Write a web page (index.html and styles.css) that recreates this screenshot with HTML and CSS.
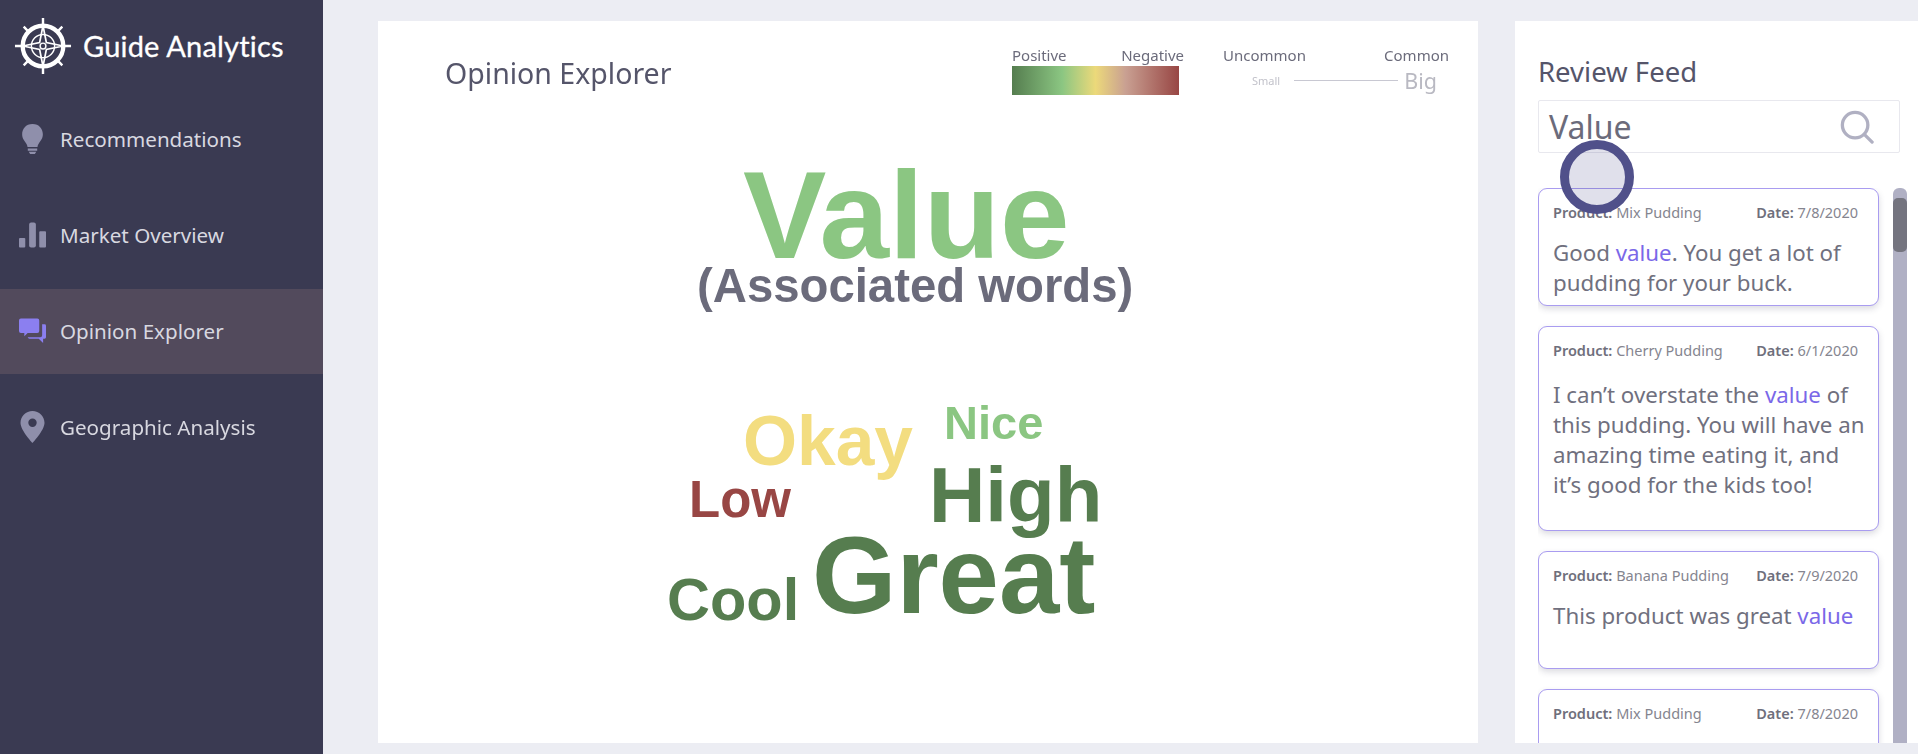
FILE: index.html
```html
<!DOCTYPE html>
<html lang="en">

<head>
    <meta charset="utf-8">
    <meta name="viewport" content="width=device-width, initial-scale=1, shrink-to-fit=no">
    <title>Opinion Explorer</title>
    <link rel="stylesheet" href="styles.css">
</head>

<body>
    <aside class="sidebar">
        <div class="brand">
            <svg class="brand-logo" viewBox="0 0 60 60" fill="none" stroke="#fff">
                <circle cx="30" cy="30" r="21" stroke-width="4.500"/>
                <circle cx="30" cy="30" r="12" stroke-width="1.500"/>
                <circle cx="30" cy="30" r="3" stroke-width="1.500"/>
                <path d="M30 1v9M30 50v9M1 30h9M50 30h9M10 10l4 4M50 10l-4 4M10 50l4-4M50 50l-4-4" stroke-width="2.500"/>
                <path d="M30 9l3.500 17.500L51 30l-17.500 3.500L30 51l-3.500-17.500L9 30l17.500-3.500z" stroke-width="1.800"/>
            </svg>
            <span class="brand-name">Guide Analytics</span>
        </div>
        <nav class="nav">
            <a class="nav-item">
                <svg class="nav-icon" viewBox="0 0 28 34"><path d="M14 1C6.800 1 3 6.300 3 12c0 4.500 2.600 7.300 4.300 9.700 1 1.400 1.200 2.500 1.400 3.800h10.600c.2-1.300.4-2.400 1.400-3.800 1.700-2.400 4.300-5.200 4.300-9.700C25 6.300 21.200 1 14 1z"/><path d="M9 27h10v2.500H9zM10 30.500h8l-1.500 2.500h-5z"/></svg>
                Recommendations
            </a>
            <a class="nav-item">
                <svg class="nav-icon" viewBox="0 0 28 28"><rect x="0" y="17" width="6.500" height="10" rx="1"/><rect x="10.500" y="1" width="7" height="26" rx="2"/><rect x="21" y="10" width="7" height="17" rx="1"/></svg>
                Market Overview
            </a>
            <a class="nav-item active">
                <svg class="nav-icon" viewBox="0 0 28 26"><path d="M2 0h17a2 2 0 0 1 2 2v11a2 2 0 0 1-2 2H9l-3.500 3.500V15H2a2 2 0 0 1-2-2V2a2 2 0 0 1 2-2z"/><path d="M24 6h2.500A1.500 1.500 0 0 1 28 7.500v12a1.500 1.500 0 0 1-1.500 1.500H25v4.500L20.500 21H11a2 2 0 0 1-2-1.500h13a2 2 0 0 0 2-2z"/></svg>
                Opinion Explorer
            </a>
            <a class="nav-item">
                <svg class="nav-icon" viewBox="0 0 24 32"><path fill-rule="evenodd" d="M12 0C5.400 0 0 5.200 0 11.800 0 19.500 12 32 12 32s12-12.500 12-20.200C24 5.200 18.600 0 12 0zm0 16a4.200 4.200 0 1 1 0-8.400 4.200 4.200 0 0 1 0 8.400z"/></svg>
                Geographic Analysis
            </a>
        </nav>
    </aside>

    <main class="content">
        <section class="explorer">
            <header class="explorer-head">
                <h1 class="explorer-title">Opinion Explorer</h1>
                <div class="legend legend-sentiment">
                    <div class="legend-labels"><span>Positive</span><span>Negative</span></div>
                    <div class="legend-gradient"></div>
                </div>
                <div class="legend legend-size">
                    <div class="legend-labels"><span>Uncommon</span><span>Common</span></div>
                    <div class="legend-scale">
                        <span class="scale-small">Small</span>
                        <span class="scale-line"></span>
                        <span class="scale-big">Big</span>
                    </div>
                </div>
            </header>
            <div class="cloud">
                <span class="word word-value">Value</span>
                <span class="word word-assoc">(Associated words)</span>
                <span class="word word-okay">Okay</span>
                <span class="word word-nice">Nice</span>
                <span class="word word-high">High</span>
                <span class="word word-low">Low</span>
                <span class="word word-great">Great</span>
                <span class="word word-cool">Cool</span>
            </div>
        </section>

        <section class="feed">
            <h2 class="feed-title">Review Feed</h2>
            <div class="search">
                <span class="search-text">Value</span>
                <svg class="search-icon" viewBox="0 0 36 36" fill="none" stroke="#b0b0c2" stroke-width="3.500" stroke-linecap="round"><circle cx="16" cy="16" r="13.500"/><path d="M26 26l8 8"/></svg>
            </div>
            <div class="feed-body">
                <div class="review-list">
                    <article class="review review-short">
                        <div class="review-meta"><span><b>Product:</b> Mix Pudding</span><span><b>Date:</b> 7/8/2020</span></div>
                        <p class="review-text">Good <em>value</em>. You get a lot of pudding for your buck.</p>
                    </article>
                    <article class="review review-tall">
                        <div class="review-meta"><span><b>Product:</b> Cherry Pudding</span><span><b>Date:</b> 6/1/2020</span></div>
                        <p class="review-text">I can’t overstate the <em>value</em> of this pudding. You will have an amazing time eating it, and it’s good for the kids too!</p>
                    </article>
                    <article class="review review-short">
                        <div class="review-meta"><span><b>Product:</b> Banana Pudding</span><span><b>Date:</b> 7/9/2020</span></div>
                        <p class="review-text">This product was great <em>value</em></p>
                    </article>
                    <article class="review review-short">
                        <div class="review-meta"><span><b>Product:</b> Mix Pudding</span><span><b>Date:</b> 7/8/2020</span></div>
                    </article>
                </div>
                <div class="scrollbar"><div class="scrollbar-thumb"></div></div>
            </div>
            <div class="touch"></div>
        </section>
    </main>
</body>

</html>
```

FILE: styles.css
```css
* {
    box-sizing: border-box;
}

html,
body {
    height: 100%;
}

body {
    display: flex;
    margin: 0;
    overflow: hidden;
    color: #5f5f70;
    background: #ecedf3;
    font-family: "Noto Sans", sans-serif;
    filter: blur(.4px);
}

/* sidebar */
.sidebar {
    flex: 0 0 323px;
    background: #3a3a52;
    color: #d8d8e0;
}

.brand {
    display: flex;
    align-items: center;
    gap: 11px;
    height: 97px;
    padding: 0 0 6px 14px;
}

.brand-logo {
    width: 58px;
    height: 58px;
}

.brand-name {
    color: #fff;
    font-family: "Lato", sans-serif;
    font-size: 29px;
    letter-spacing: .2px;
    -webkit-text-stroke: .3px #fff;
}

.nav {
    display: flex;
    flex-direction: column;
    gap: 11px;
}

.nav-item {
    display: flex;
    align-items: center;
    height: 85px;
    padding: 0 0 2px 19px;
    font-size: 20.600px;
}

.nav-item.active {
    background: #524a5c;
}

.nav-icon {
    flex: 0 0 27px;
    width: 27px;
    height: 32px;
    margin-right: 14px;
    fill: #8f8fab;
}

.nav-item.active .nav-icon {
    fill: #8b7ff0;
}

/* main area */
.content {
    flex: 1;
    display: flex;
    gap: 37px;
    padding: 21px 0 11px 55px;
    min-width: 0;
}

.explorer {
    flex: 0 0 1100px;
    display: flex;
    flex-direction: column;
    background: #fff;
}

.explorer-head {
    display: flex;
    flex: 0 0 90px;
    padding: 25px 29px 0 67px;
}

.explorer-title {
    margin: 9px auto 0 0;
    font-size: 28.500px;
    font-weight: 400;
    line-height: 36px;
    color: #55556a;
}

.legend-labels {
    display: flex;
    justify-content: space-between;
    font-size: 15px;
    line-height: 18px;
    color: #6b6b7b;
}

.legend-sentiment {
    width: 172px;
}

.legend-gradient {
    width: 167px;
    height: 29px;
    margin-top: 2px;
    background: linear-gradient(90deg, #557d4f 0%, #8bc682 30%, #ecd97a 50%, #c9a092 68%, #984644 100%);
}

.legend-size {
    width: 226px;
    margin-left: 39px;
}

.legend-scale {
    display: flex;
    align-items: center;
    padding-left: 29px;
    height: 32px;
}

.scale-small {
    font-size: 11px;
    color: #c2c2ca;
}

.scale-line {
    width: 104px;
    height: 1px;
    margin: 0 6px 0 14px;
    background: #c8c8d2;
}

.scale-big {
    font-size: 21.500px;
    color: #b9b9c2;
}

.cloud {
    position: relative;
    flex: 1;
    font-family: "Liberation Sans", sans-serif;
    font-weight: 700;
}

.word {
    position: absolute;
    line-height: 1;
    white-space: nowrap;
}

.word-value {
    left: 365px;
    top: 41px;
    font-size: 125px;
    color: #8bc682;
}

.word-assoc {
    left: 319px;
    top: 151px;
    font-size: 47.300px;
    color: #6b6b7b;
}

.word-okay {
    left: 365px;
    top: 296px;
    font-size: 69.500px;
    color: #f3dd80;
}

.word-nice {
    left: 566px;
    top: 288px;
    font-size: 47px;
    color: #8bc682;
}

.word-high {
    left: 551px;
    top: 345px;
    font-size: 78px;
    color: #567d4f;
}

.word-low {
    left: 311px;
    top: 363px;
    font-size: 51px;
    color: #984644;
}

.word-great {
    left: 434px;
    top: 411px;
    font-size: 108.500px;
    color: #567d4f;
}

.word-cool {
    left: 289px;
    top: 459px;
    font-size: 59.500px;
    color: #567d4f;
}

/* review feed */
.feed {
    position: relative;
    flex: 1;
    display: flex;
    flex-direction: column;
    min-width: 0;
    padding: 33px 11px 0 23px;
    background: #fff;
}

.feed-title {
    margin: 0;
    font-size: 27.500px;
    font-weight: 400;
    line-height: 36px;
    color: #55556a;
}

.search {
    display: flex;
    align-items: center;
    justify-content: space-between;
    height: 53px;
    margin: 10px 7px 0 0;
    padding: 0 25px 0 10px;
    border: 1px solid #e8e8ee;
    border-radius: 2px;
}

.search-text {
    font-size: 32px;
    color: #6b6b7b;
}

.search-icon {
    width: 34px;
    height: 34px;
}

.feed-body {
    flex: 1;
    display: flex;
    gap: 14px;
    min-height: 0;
    margin-top: 35px;
    overflow: hidden;
}

.review-list {
    flex: 0 0 341px;
    display: flex;
    flex-direction: column;
    gap: 20px;
    padding-bottom: 60px;
}

.review {
    flex: none;
    padding: 13px 20px 0 14px;
    border: 1.500px solid #a99cf0;
    border-radius: 9px;
    background: #fff;
    box-shadow: 0 3px 6px rgba(60, 60, 90, .18);
}

.review-short {
    height: 118px;
}

.review-tall {
    height: 205px;
}

.review-meta {
    display: flex;
    justify-content: space-between;
    font-size: 14.500px;
    line-height: 20px;
    color: #85858f;
}

.review-meta b {
    font-weight: 600;
    color: #6f6f7c;
}

.review-text {
    margin: 16px -12px 0 0;
    font-size: 22.300px;
    line-height: 30px;
    color: #70707e;
}

.review-tall .review-text {
    margin-top: 20px;
}

.review-text em {
    font-style: normal;
    color: #7a68e8;
}

.scrollbar {
    flex: 0 0 14px;
    padding-top: 10px;
    border-radius: 6px 6px 0 0;
    background: #b0b0c4;
}

.scrollbar-thumb {
    height: 54px;
    border-radius: 5px;
    background: #74747f;
}

/* touch marker over the search field */
.touch {
    position: absolute;
    left: 45px;
    top: 119px;
    width: 74px;
    height: 74px;
    border: 9px solid #50508a;
    border-radius: 50%;
    background: rgba(60, 60, 130, .16);
}
```
